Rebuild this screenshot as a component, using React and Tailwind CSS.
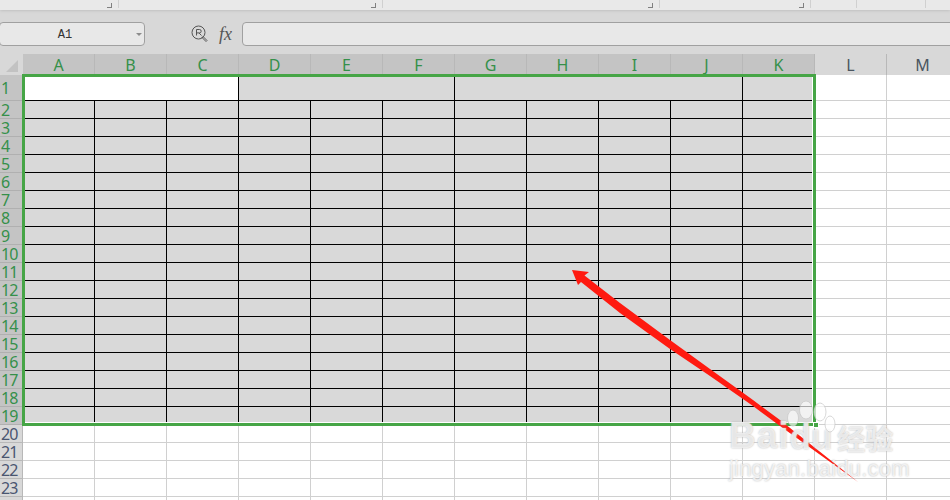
const cols = ['A', 'B', 'C', 'D', 'E', 'F', 'G', 'H', 'I', 'J', 'K'];
const rows = Array.from({ length: 24 }, (_, i) => i + 1);

function ToolbarSection({ width, corner }) {
  return (
    <div className={`${width} h-[8px] flex justify-end items-end pr-[6px] border-r border-[#d0d0d0]`}>
      {corner && <div className="w-[5px] h-[5px] border-r border-b border-[#808080]" />}
    </div>
  );
}

function Toolbar() {
  return (
    <div className="h-[10px] bg-[#e9e9e9] flex shadow-[0_1px_3px_#c0c0c0] relative">
      <ToolbarSection width="w-[119px]" corner />
      <ToolbarSection width="w-[264px]" corner />
      <ToolbarSection width="w-[277px]" corner />
      <ToolbarSection width="w-[151px]" corner />
      <ToolbarSection width="w-[46px]" />
      <ToolbarSection width="w-[69px]" />
    </div>
  );
}

function FormulaBar() {
  return (
    <div className="h-[44px] bg-[#d8d8d8] flex items-center pt-[4px]">
      <div className="w-[146px] h-[24px] -ml-px bg-[#e8e8e8] border border-[#a0a0a0] rounded-[4px] flex items-center">
        <span className="w-[130px] pt-[2px] text-center text-[12px] leading-none text-[#333] font-['Liberation_Mono',monospace]">A1</span>
        <span className="ml-[6px] w-0 h-0 border-x-[3px] border-x-transparent border-t-[3px] border-t-[#8c8c8c]" />
      </div>
      <svg className="ml-[46px]" width="18" height="18" viewBox="0 0 18 18" fill="none" stroke="#555" strokeWidth="1">
        <circle cx="7.5" cy="7.5" r="6.5" />
        <path d="M5.5 10.5v-6h3a1.7 1.7 0 0 1 0 3.4h-3M8 8l2.5 2.5" />
        <path d="M12 11.5l4 4-1 1-4-4z" />
      </svg>
      <span className="ml-[10px] w-[16px] text-[18px] leading-none italic text-[#555] font-['Liberation_Serif',serif]">fx</span>
      <div className="ml-[7px] flex-1 -mr-[6px] h-[24px] bg-[#e8e8e8] border border-[#a0a0a0] rounded-[4px]" />
    </div>
  );
}

function ColumnHeader() {
  return (
    <div className="h-[21px] bg-[#d8d8d8] flex">
      <div className="w-[23px] shrink-0 relative">
        <div className="absolute right-[5px] bottom-[3px] w-0 h-0 border-l-[12px] border-l-transparent border-b-[12px] border-b-[#c2c2c2]" />
      </div>
      {[...cols, 'L', 'M'].map((c, i) => (
        <div
          key={c}
          className={`w-[72px] h-full shrink-0 flex items-center justify-center border-r border-[#b8b8b8] text-[16px] leading-none font-['Noto_Sans',sans-serif] ${i < 11 ? 'bg-[#c4c4c4] text-[#35904a]' : 'text-[#4a5560]'}`}
        >
          {c}
        </div>
      ))}
    </div>
  );
}

function RowHeader() {
  return (
    <div className="w-[23px] shrink-0 flex flex-col">
      {rows.map(r => (
        <div
          key={r}
          className={`${r === 1 ? 'h-[26px]' : 'h-[18px]'} shrink-0 flex items-center pl-[1px] border-b border-r text-[16px] leading-none tracking-[-1px] font-['Noto_Sans',sans-serif] ${r < 20 ? 'bg-[#c4c4c4] text-[#35904a] border-[#b0b0b0]' : 'bg-[#d8d8d8] text-[#4a5570] border-[#b8b8b8]'}`}
        >
          {r < 24 ? r : ''}
        </div>
      ))}
    </div>
  );
}

function Sheet() {
  const rest = rows.slice(1);
  return (
    <div className="flex-1 relative">
      {/* merged first row */}
      <div className="flex h-[26px]">
        <div className="w-[216px] bg-white border-r border-b border-black" />
        <div className="w-[216px] bg-[#d9d9d9] border-r border-b border-black" />
        <div className="w-[288px] bg-[#d9d9d9] border-r border-b border-black" />
        <div className="w-[72px] bg-[#d9d9d9] border-b border-black" />
        <div className="w-[72px] border-r border-b border-[#d0d0d0]" />
        <div className="w-[72px] border-r border-b border-[#d0d0d0]" />
      </div>
      {rest.map(r => (
        <div key={r} className="flex h-[18px]">
          {[...cols, 'L', 'M'].map((c, i) => (
            <div
              key={c}
              className={`w-[72px] shrink-0 border-r border-b ${i < 11 && r < 20 ? 'bg-[#d9d9d9] border-black' : 'border-[#d0d0d0]'}`}
            />
          ))}
        </div>
      ))}
      {/* selection frame */}
      <div className="absolute left-[-1px] top-[-1px] w-[794px] h-[352px] border-[3px] border-[#46a546] shadow-[inset_-1px_-1px_0_#fff] pointer-events-none" />
      <div className="absolute left-[790px] top-[347px] w-[6px] h-[6px] bg-[#46a546] border border-white" />
    </div>
  );
}

function Arrow() {
  return (
    <svg className="absolute left-0 top-0 pointer-events-none" width="950" height="500" viewBox="0 0 950 500">
      <polygon
        fill="#ff1a10"
        points="572,270 589,272 584.5,275.5 620,303 670,340 710,369 753,400 780,420 858,482 780,426 753,406 710,376 670,349 620,313 581,282 578,285"
      />
    </svg>
  );
}

function Watermark() {
  const glow = "[text-shadow:0_0_2px_#b4b4b4]";
  return (
    <div className="absolute left-[729px] top-[400px] w-[175px] pointer-events-none text-white/70 font-['Liberation_Sans',sans-serif]">
      <svg className="absolute left-[57px] top-0" width="50" height="34" viewBox="0 0 50 34" fill="#fff" fillOpacity="0.65" stroke="#c8c8c8" strokeOpacity="0.7">
        <ellipse cx="7" cy="18" rx="5.5" ry="8" />
        <ellipse cx="20" cy="10" rx="6.5" ry="9" />
        <ellipse cx="34" cy="12" rx="6" ry="9" />
        <ellipse cx="44" cy="24" rx="5" ry="8" />
      </svg>
      <div className="flex items-end h-[54px] leading-none">
        <span className={`text-[37px] font-bold tracking-[1px] ${glow}`}>Bai</span>
        <span className={`text-[35px] font-bold ${glow}`}>du</span>
        <span className={`ml-[5px] mb-[2px] text-[28px] font-bold font-['Noto_Sans_CJK_SC',sans-serif] ${glow}`}>经验</span>
      </div>
      <div className={`mt-[3px] text-[22px] leading-[24px] tracking-[0.2px] whitespace-nowrap ${glow}`}>jingyan.baidu.com</div>
    </div>
  );
}

export default function App() {
  return (
    <div className="w-[950px] h-[500px] overflow-hidden relative bg-white">
      <Toolbar />
      <FormulaBar />
      <ColumnHeader />
      <div className="flex">
        <RowHeader />
        <Sheet />
      </div>
      <Arrow />
      <Watermark />
    </div>
  );
}
